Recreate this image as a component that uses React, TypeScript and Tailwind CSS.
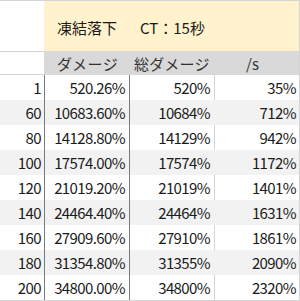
const rows = [
  ["1", "520.26%", "520%", "35%"],
  ["60", "10683.60%", "10684%", "712%"],
  ["80", "14128.80%", "14129%", "942%"],
  ["100", "17574.00%", "17574%", "1172%"],
  ["120", "21019.20%", "21019%", "1401%"],
  ["140", "24464.40%", "24464%", "1631%"],
  ["160", "27909.60%", "27910%", "1861%"],
  ["180", "31354.80%", "31355%", "2090%"],
  ["200", "34800.00%", "34800%", "2320%"],
]

export default function App() {
  return (
    <div
      className="w-[300px] h-[301px] bg-white text-[15px] text-[#1a1a1a] overflow-hidden"
      style={{ fontFamily: '"Noto Sans CJK JP", "Noto Sans", sans-serif' }}
    >
      <div className="border-t border-r border-b border-[#d4d4d4] w-[300px]">
        {/* title row */}
        <div className="flex h-[50px]">
          <div className="w-[44px] bg-white" />
          <div className="flex-1 bg-[#fff2cc] flex items-center pl-[13px] pt-[2px] gap-[23px] leading-none">
            <span>凍結落下</span>
            <span>CT：15秒</span>
          </div>
        </div>

        {/* column header row */}
        <div className="flex h-[24px]">
          <div className="w-[44px] border-t border-b border-[#d4d4d4] bg-white" />
          <div className="flex-1 bg-[#d9d9d9] flex items-center leading-none text-[#333]">
            <span className="w-[85px] pl-[13px] tracking-[0.5px]">ダメージ</span>
            <span className="w-[85px] pl-[5px] tracking-[0.3px]">総ダメージ</span>
            <span className="pl-[32px]">/s</span>
          </div>
        </div>

        {rows.map((r, i) => (
          <div
            key={r[0]}
            className={`flex h-[25px] leading-none tracking-[-0.6px] ${i % 2 === 1 ? "bg-[#f2f2f2]" : "bg-white"}`}
          >
            <div className="w-[44px] flex items-center justify-end pr-[3px]">{r[0]}</div>
            <div className="w-[86px] border-l border-r border-[#7a7a7a] flex items-center justify-end pr-[4px]">
              {r[1]}
            </div>
            <div
              className={`w-[85px] border-r flex items-center justify-end pr-[4px] ${
                i % 2 === 1 ? "border-[#f2f2f2]" : "border-[#d4d4d4]"
              }`}
            >
              {r[2]}
            </div>
            <div className="flex-1 flex items-center justify-end pr-[3px]">{r[3]}</div>
          </div>
        ))}
      </div>
    </div>
  )
}
